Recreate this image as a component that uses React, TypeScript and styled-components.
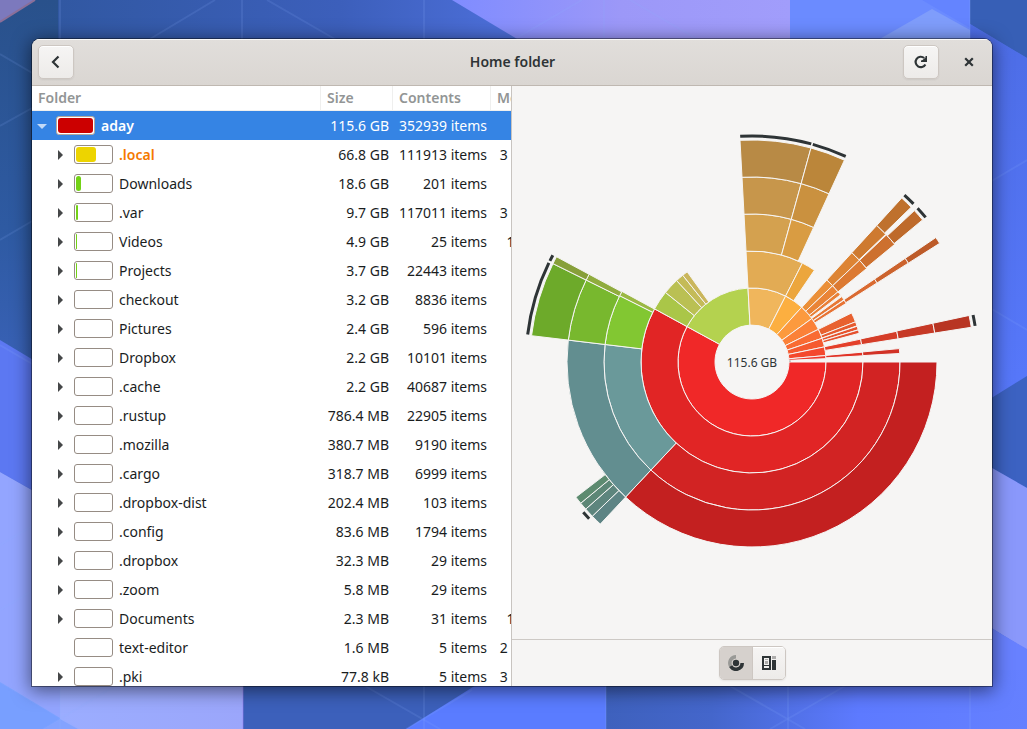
import React from 'react';
import styled, { createGlobalStyle } from 'styled-components';

const Global = createGlobalStyle`
  *, *::before, *::after { box-sizing: border-box; }
  html, body { margin: 0; padding: 0; }
  body {
    background: #4a6ad8;
    font-family: "Noto Sans", "Open Sans", sans-serif;
    font-size: 14px;
    line-height: 20px;
    color: #1a1d1e;
  }
`;

/* ---------- desktop ---------- */

const Desktop = styled.div`
  position: relative;
  display: flex;
  height: 100vh;
  padding: 39px 35px 43px 32px;
  overflow: hidden;
`;

const WallpaperSvg = styled.svg`
  position: absolute;
  inset: 0;
  width: 100%;
  height: 100%;
`;

function Wallpaper() {
  return (
    <WallpaperSvg viewBox="0 0 1027 729" preserveAspectRatio="none" aria-hidden="true">
      <defs>
        <linearGradient id="wTop" x1="0" x2="1" y1="0" y2="0">
          <stop offset="0" stopColor="#3158a2" />
          <stop offset="0.6" stopColor="#3c5fbb" />
          <stop offset="1" stopColor="#4e70dc" />
        </linearGradient>
        <linearGradient id="wLilac" x1="0" x2="1" y1="0" y2="0">
          <stop offset="0" stopColor="#7f8cff" />
          <stop offset="0.5" stopColor="#9c98f8" />
          <stop offset="1" stopColor="#a19dfb" />
        </linearGradient>
        <linearGradient id="wLeft" x1="0" x2="0" y1="0" y2="1">
          <stop offset="0" stopColor="#29518b" />
          <stop offset="0.6" stopColor="#2e5aa2" />
          <stop offset="1" stopColor="#3a62b8" />
        </linearGradient>
        <linearGradient id="wBottomMid" x1="0" x2="1" y1="0" y2="0">
          <stop offset="0" stopColor="#3e61bd" />
          <stop offset="0.25" stopColor="#4466cb" />
          <stop offset="0.6" stopColor="#5d7aff" />
          <stop offset="1" stopColor="#6580ff" />
        </linearGradient>
        <linearGradient id="wBottomLeft" x1="0" x2="1" y1="0" y2="0">
          <stop offset="0" stopColor="#9badff" />
          <stop offset="1" stopColor="#9ba6fb" />
        </linearGradient>
        <linearGradient id="wRight" x1="0" x2="0" y1="0" y2="1">
          <stop offset="0" stopColor="#4d6de6" />
          <stop offset="1" stopColor="#5778fb" />
        </linearGradient>
      </defs>
      <rect width="1027" height="729" fill="#4c6de0" />
      <rect x="58" width="470" height="60" fill="url(#wTop)" />
      <rect width="58" height="380" fill="url(#wLeft)" />
      <path d="M0 0H35L0 22Z" fill="#7c79bd" />
      <path d="M35 0L0 22" stroke="#8b6f98" strokeWidth="2" />
      <path d="M452 0H790V60H552Z" fill="url(#wLilac)" />
      <rect x="790" width="180" height="60" fill="#6b8bff" />
      <path d="M932 9L850 56H970V30Z" fill="#7f9dfb" />
      <path d="M922 0H970V28Z" fill="#6484ff" />
      <path d="M970 0H1027V58L970 24Z" fill="#375fb6" />
      <path d="M970 24L1027 58V380L970 412Z" fill="url(#wRight)" />
      <path d="M1027 376L985 402V464L1027 488Z" fill="#3c62c2" />
      <path d="M985 464L1027 488V650L985 624Z" fill="#8a98fb" />
      <path d="M985 624L1027 650V729H985Z" fill="#6680ff" />
      <path d="M0 340L50 370V500L0 472Z" fill="#5c78f2" />
      <path d="M0 472L60 506V729H0Z" fill="#93a5ff" />
      <path d="M0 682L60 718V729H0Z" fill="#789fff" />
      <rect x="60" y="670" width="183" height="59" fill="url(#wBottomLeft)" />
      <path d="M60 719L78 729H43Z" fill="#84a3ff" />
      <rect x="243" y="670" width="260" height="59" fill="#3c60bb" />
      <path d="M500 670H606V729H406Z" fill="#5a7cff" />
      <rect x="606" y="670" width="421" height="59" fill="url(#wBottomMid)" />
      <path d="M992 629L1027 649V670H992Z" fill="#6881ff" />
      <g stroke="#8fb0ff" strokeOpacity="0.14" strokeWidth="2" fill="none">
        <path d="M60 0V60M242 0V60M424 0V60M604 0V60M970 0V60" />
        <path d="M215 0L150 39M267 0L340 42M582 0L510 42M630 0L702 42" />
        <path d="M0 54L34 74M0 126L34 107M1027 160L990 182M1027 330L990 308" />
        <path d="M60 680V729M424 680V729M606 680V729M788 680V729M970 680V729" />
        <path d="M0 682L78 729M43 729L115 686M365 686L440 729M472 690L406 729M730 686L805 729M845 686L770 729" />
        <path d="M0 545L34 525M0 610L34 590M0 345L34 365M0 240L34 220" />
      </g>
      <path d="M243 680V729" stroke="#9a7ff0" strokeOpacity="0.6" strokeWidth="1" />
    </WallpaperSvg>
  );
}

/* ---------- window ---------- */

const Window = styled.main`
  position: relative;
  flex: 1;
  min-width: 0;
  display: flex;
  flex-direction: column;
  overflow: hidden;
  border-radius: 8px 8px 0 0;
  background: #f6f5f4;
  box-shadow: 0 0 0 1px rgba(0, 0, 0, 0.4), 0 3px 18px 2px rgba(0, 0, 0, 0.5);
`;

const HeaderBar = styled.header`
  flex: none;
  display: grid;
  grid-template-columns: 1fr auto 1fr;
  align-items: center;
  height: 47px;
  padding: 0 5px 0 6px;
  border-bottom: 1px solid #bfb8b1;
  background: linear-gradient(#e1dedb, #dad6d2);
  box-shadow: inset 0 1px #f9f9f8;
`;

const Title = styled.h1`
  margin: 0;
  font-size: 14px;
  line-height: 20px;
  font-weight: 600;
  color: #2e3436;
`;

const HeaderEnd = styled.div`
  display: flex;
  justify-content: flex-end;
  gap: 12px;
`;

const HeaderButton = styled.button<{ $flat?: boolean }>`
  display: flex;
  align-items: center;
  justify-content: center;
  width: 36px;
  height: 34px;
  padding: 0;
  border: 1px solid ${(p) => (p.$flat ? 'transparent' : '#cdc7c2')};
  border-radius: 5px;
  background: ${(p) => (p.$flat ? 'none' : 'linear-gradient(#f6f5f4, #edebe9)')};
  box-shadow: ${(p) => (p.$flat ? 'none' : 'inset 0 1px #fff, 0 1px 2px rgba(0, 0, 0, 0.07)')};
  color: #2e3436;
`;

const Panes = styled.div`
  flex: 1;
  min-height: 0;
  display: flex;
`;

const TreePane = styled.section`
  flex: 0 0 50%;
  min-width: 0;
  overflow: hidden;
  border-right: 1px solid #c8c4c0;
  background: #fff;
`;

const ChartPane = styled.section`
  flex: 1;
  min-width: 0;
  display: flex;
  flex-direction: column;
`;

/* ---------- folder tree ---------- */

const Tree = styled.table`
  width: 100%;
  min-width: 534px;
  table-layout: fixed;
  border-collapse: separate;
  border-spacing: 0;
`;

const Col = styled.col<{ $width?: number }>`
  width: ${(p) => (p.$width ? `${p.$width}px` : 'auto')};
`;

const HeadCell = styled.th`
  height: 25px;
  padding: 0 6px;
  border-right: 1px solid #efefee;
  border-bottom: 1px solid #efefee;
  text-align: left;
  font-weight: 600;
  color: #929595;
`;

const Row = styled.tr<{ $selected?: boolean }>`
  background: ${(p) => (p.$selected ? '#3584e4' : '#fff')};
  color: ${(p) => (p.$selected ? '#fff' : 'inherit')};
`;

const Cell = styled.td`
  height: 29px;
  padding: 0 4px;
  text-align: right;
  white-space: nowrap;
`;

const FolderCell = styled(Cell)`
  padding: 0;
  text-align: left;
`;

const FolderLine = styled.div<{ $depth: number }>`
  display: flex;
  align-items: center;
  gap: 6px;
  padding-left: ${(p) => 2 + p.$depth * 18}px;
`;

const Expander = styled.button`
  display: flex;
  align-items: center;
  justify-content: center;
  width: 16px;
  height: 16px;
  padding: 0;
  border: 0;
  background: none;
  color: inherit;
`;

const ExpanderGap = styled.span`
  width: 16px;
`;

const UsageBar = styled.span<{ $selected?: boolean }>`
  display: flex;
  width: 39px;
  height: 19px;
  padding: 1px;
  border: 1px solid ${(p) => (p.$selected ? '#b3a79c' : '#968c84')};
  border-radius: 3px;
  background: #fff;
`;

const UsageFill = styled.span<{ $color: string; $width: number }>`
  width: ${(p) => p.$width}px;
  border-radius: ${(p) => (p.$width > 4 ? 3 : 1)}px;
  background: ${(p) => p.$color};
`;

const FolderName = styled.span<{ $tone: 'plain' | 'root' | 'accent' }>`
  font-weight: ${(p) => (p.$tone === 'plain' ? 400 : 600)};
  color: ${(p) => (p.$tone === 'accent' ? '#f57900' : 'inherit')};
`;

type Folder = {
  name: string;
  size: string;
  items: string;
  modified?: string;
  fill?: [string, number];
  leaf?: boolean;
  tone?: 'root' | 'accent';
};

const folders: Folder[] = [
  { name: 'aday', size: '115.6 GB', items: '352939 items', fill: ['#cc0000', 35], tone: 'root' },
  { name: '.local', size: '66.8 GB', items: '111913 items', modified: '3 months', fill: ['#edd400', 20], tone: 'accent' },
  { name: 'Downloads', size: '18.6 GB', items: '201 items', fill: ['#73d216', 5] },
  { name: '.var', size: '9.7 GB', items: '117011 items', modified: '3 months', fill: ['#73d216', 2] },
  { name: 'Videos', size: '4.9 GB', items: '25 items', modified: '1 month', fill: ['#73d216', 1] },
  { name: 'Projects', size: '3.7 GB', items: '22443 items', fill: ['#73d216', 1] },
  { name: 'checkout', size: '3.2 GB', items: '8836 items' },
  { name: 'Pictures', size: '2.4 GB', items: '596 items' },
  { name: 'Dropbox', size: '2.2 GB', items: '10101 items' },
  { name: '.cache', size: '2.2 GB', items: '40687 items' },
  { name: '.rustup', size: '786.4 MB', items: '22905 items' },
  { name: '.mozilla', size: '380.7 MB', items: '9190 items' },
  { name: '.cargo', size: '318.7 MB', items: '6999 items' },
  { name: '.dropbox-dist', size: '202.4 MB', items: '103 items' },
  { name: '.config', size: '83.6 MB', items: '1794 items' },
  { name: '.dropbox', size: '32.3 MB', items: '29 items' },
  { name: '.zoom', size: '5.8 MB', items: '29 items' },
  { name: 'Documents', size: '2.3 MB', items: '31 items', modified: '1 month' },
  { name: 'text-editor', size: '1.6 MB', items: '5 items', modified: '2 months', leaf: true },
  { name: '.pki', size: '77.8 kB', items: '5 items', modified: '3 months' },
];

function FolderTree() {
  return (
    <Tree>
      <colgroup>
        <Col $width={289} />
        <Col $width={72} />
        <Col $width={98} />
        <Col />
      </colgroup>
      <thead>
        <tr>
          <HeadCell scope="col">Folder</HeadCell>
          <HeadCell scope="col">Size</HeadCell>
          <HeadCell scope="col">Contents</HeadCell>
          <HeadCell scope="col">Modified</HeadCell>
        </tr>
      </thead>
      <tbody>
        {folders.map((f) => {
          const root = f.tone === 'root';
          return (
            <Row key={f.name} $selected={root} aria-selected={root}>
              <FolderCell>
                <FolderLine $depth={root ? 0 : 1}>
                  {f.leaf ? (
                    <ExpanderGap />
                  ) : (
                    <Expander aria-label={`Toggle ${f.name}`} aria-expanded={root}>
                      <svg width="10" height="10" viewBox="0 0 10 10" aria-hidden="true">
                        {root ? (
                          <path d="M0 3H10L5 8Z" fill="#c3daf7" />
                        ) : (
                          <path d="M3 0V10L8 5Z" fill="#454748" />
                        )}
                      </svg>
                    </Expander>
                  )}
                  <UsageBar $selected={root}>
                    {f.fill && <UsageFill $color={f.fill[0]} $width={f.fill[1]} />}
                  </UsageBar>
                  <FolderName $tone={f.tone ?? 'plain'}>{f.name}</FolderName>
                </FolderLine>
              </FolderCell>
              <Cell>{f.size}</Cell>
              <Cell>{f.items}</Cell>
              <Cell>{f.modified}</Cell>
            </Row>
          );
        })}
      </tbody>
    </Tree>
  );
}

/* ---------- rings chart ---------- */

const ChartArea = styled.div`
  flex: 1;
  min-height: 0;
  display: flex;
  align-items: center;
  justify-content: center;
`;

const ChartLabel = styled.text`
  font-size: 12px;
  fill: #2e3436;
`;

const RING = 37;

function point(radius: number, degrees: number) {
  const a = (degrees * Math.PI) / 180;
  return `${(radius * Math.cos(a)).toFixed(2)} ${(radius * Math.sin(a)).toFixed(2)}`;
}

function sector(level: number, from: number, to: number) {
  const inner = RING * level;
  const outer = inner + RING;
  const large = to - from > 180 ? 1 : 0;
  return (
    `M${point(inner, from)}L${point(outer, from)}` +
    `A${outer} ${outer} 0 ${large} 1 ${point(outer, to)}` +
    `L${point(inner, to)}A${inner} ${inner} 0 ${large} 0 ${point(inner, from)}Z`
  );
}

function arc(radius: number, from: number, to: number) {
  return `M${point(radius, from)}A${radius} ${radius} 0 0 1 ${point(radius, to)}`;
}

/* level, start angle, end angle, colour */
const sectors: [number, number, number, string][] = [
  [1, 0, 208.6, '#f02828'],
  [1, 208.6, 266.9, '#b4d24f'],
  [1, 266.9, 297, '#f0b65c'],
  [1, 297, 312.2, '#fcaf40'],
  [1, 312.2, 324, '#fc9a3e'],
  [1, 324, 333.8, '#fb8138'],
  [1, 333.8, 341.3, '#f96b33'],
  [1, 341.3, 348.2, '#f55a30'],
  [1, 348.2, 355, '#f4482d'],
  [1, 355, 357.4, '#ef382b'],

  [2, 0, 208.6, '#e12525'],
  [2, 208.6, 218.8, '#aac648'],
  [2, 218.8, 227.2, '#bac053'],
  [2, 227.2, 231.4, '#c4bb58'],
  [2, 231.4, 234.3, '#cab65c'],
  [2, 266.9, 297, '#e2ab54'],
  [2, 297, 304.2, '#eca63d'],
  [2, 312.4, 316.6, '#eb8f38'],
  [2, 316.6, 320.8, '#ea8436'],
  [2, 320.8, 322.8, '#e97f36'],
  [2, 323.9, 325.9, '#e87835'],
  [2, 326.1, 328.1, '#e87334'],
  [2, 333.8, 338.8, '#e86130'],
  [2, 338.8, 341, '#e65a2f'],
  [2, 341.2, 343.1, '#e6542e'],
  [2, 343.2, 345, '#e5502d'],
  [2, 348.1, 351, '#e43f2a'],
  [2, 354.9, 356.8, '#e13327'],

  [3, 0, 133.1, '#d22323'],
  [3, 133.1, 186.8, '#6a999a'],
  [3, 186.8, 206.6, '#82c732'],
  [3, 206.6, 208.5, '#9bb844'],
  [3, 266.9, 285.4, '#d4a14f'],
  [3, 285.4, 294.6, '#d99c42'],
  [3, 312.4, 316.6, '#dd8434'],
  [3, 316.6, 320.8, '#dc7a32'],
  [3, 325.9, 327.7, '#da6a31'],
  [3, 348, 351, '#d53d28'],
  [3, 354.8, 356.7, '#d23226'],

  [4, 0, 133.1, '#c32020'],
  [4, 133.1, 186.8, '#628e90'],
  [4, 186.8, 206.3, '#78b82e'],
  [4, 206.3, 208.3, '#90ac3e'],
  [4, 266.9, 285.4, '#c7964b'],
  [4, 285.4, 294.6, '#ca913f'],
  [4, 312.4, 316.3, '#ce7a30'],
  [4, 316.6, 320.5, '#cd702f'],
  [4, 325.9, 327.7, '#cc632d'],
  [4, 347.9, 351, '#c63926'],

  [5, 133.1, 136, '#5d8484'],
  [5, 136, 138.5, '#5d857d'],
  [5, 138.5, 140.5, '#5d8776'],
  [5, 140.5, 142.5, '#5d8b70'],
  [5, 186.8, 206.3, '#6daa2a'],
  [5, 206.3, 208.3, '#879f39'],
  [5, 266.9, 285.4, '#b88a45'],
  [5, 285.4, 294.6, '#bb863a'],
  [5, 312.4, 315.8, '#bf712d'],
  [5, 317, 320.2, '#be6a2b'],
  [5, 325.9, 327.7, '#bd5b29'],
  [5, 347.9, 351, '#b83523'],
];

/* arcs telling that a branch goes deeper than the rings drawn */
const deeper: [number, number][] = [
  [136.1, 138.3],
  [187, 206],
  [206.6, 208.2],
  [267, 285.2],
  [285.6, 294.5],
  [312.4, 315.6],
  [317.1, 320.2],
  [348, 350.8],
];

function RingsChart() {
  return (
    <svg width="460" height="461" viewBox="-230 -230 460 461" role="img" aria-label="Rings chart of folder sizes">
      <g stroke="#f6f5f4" strokeWidth="1">
        {sectors.map(([level, from, to, color]) => (
          <path key={`${level}-${from}`} d={sector(level, from, to)} fill={color} />
        ))}
      </g>
      <path d={arc(38, 357.6, 359.6)} stroke="#a9a6a2" strokeWidth="1.5" fill="none" />
      <g stroke="#2e3436" strokeWidth="3" fill="none">
        {deeper.map(([from, to]) => (
          <path key={from} d={arc(226, from, to)} />
        ))}
      </g>
      <ChartLabel x="0" y="5" textAnchor="middle">
        115.6 GB
      </ChartLabel>
    </svg>
  );
}

/* ---------- chart switcher ---------- */

const Switcher = styled.div`
  flex: none;
  display: flex;
  justify-content: center;
  align-items: center;
  height: 47px;
  border-top: 1px solid #cdc9c5;
`;

const SwitchGroup = styled.div`
  display: flex;
  height: 34px;
  border: 1px solid #cdc7c2;
  border-radius: 5px;
  overflow: hidden;
  box-shadow: 0 1px 2px rgba(0, 0, 0, 0.07);
`;

const SwitchButton = styled.button<{ $active?: boolean }>`
  display: flex;
  align-items: center;
  justify-content: center;
  width: ${(p) => (p.$active ? 33 : 32)}px;
  padding: 0;
  border: 0;
  border-right: ${(p) => (p.$active ? '1px solid #cdc7c2' : '0')};
  background: ${(p) => (p.$active ? '#d6d1cd' : 'linear-gradient(#f6f5f4, #edebe9)')};
  box-shadow: ${(p) => (p.$active ? 'none' : 'inset 0 1px #fff')};
`;

export default function App() {
  return (
    <>
      <Global />
      <Desktop>
        <Wallpaper />
        <Window>
          <HeaderBar>
            <HeaderButton aria-label="Back">
              <svg width="16" height="16" viewBox="0 0 16 16" fill="none" stroke="currentColor" strokeWidth="2.2" aria-hidden="true">
                <path d="M10.5 2.5L5 8L10.5 13.5" />
              </svg>
            </HeaderButton>
            <Title>Home folder</Title>
            <HeaderEnd>
              <HeaderButton aria-label="Reload">
                <svg width="16" height="16" viewBox="0 0 16 16" aria-hidden="true">
                  <path d="M12.4 10.4A5.2 5.2 0 1 1 11.2 4" fill="none" stroke="currentColor" strokeWidth="2.2" />
                  <path d="M14 2V8H8V6.5L9.5 6L12.5 3.5V2Z" fill="currentColor" />
                </svg>
              </HeaderButton>
              <HeaderButton $flat aria-label="Close">
                <svg width="16" height="16" viewBox="0 0 16 16" fill="none" stroke="currentColor" strokeWidth="2.2" aria-hidden="true">
                  <path d="M4.2 4.2L11.8 11.8M11.8 4.2L4.2 11.8" />
                </svg>
              </HeaderButton>
            </HeaderEnd>
          </HeaderBar>
          <Panes>
            <TreePane>
              <FolderTree />
            </TreePane>
            <ChartPane>
              <ChartArea>
                <RingsChart />
              </ChartArea>
              <Switcher>
                <SwitchGroup role="group" aria-label="Chart type">
                  <SwitchButton $active aria-pressed="true" aria-label="Rings chart">
                    <svg width="16" height="16" viewBox="0 0 16 16" aria-hidden="true">
                      <path d="M8 0A8 8 0 0 0 1.1 12L4.2 10.2A4.4 4.4 0 0 1 8 3.6Z" fill="#999996" />
                      <path d="M16 8A8 8 0 0 1 1.1 12L4.2 10.2A4.4 4.4 0 0 0 12.4 8Z" fill="#2e3436" />
                      <circle cx="8" cy="8" r="3.2" fill="#2e3436" />
                    </svg>
                  </SwitchButton>
                  <SwitchButton aria-pressed="false" aria-label="Treemap chart">
                    <svg width="16" height="16" viewBox="0 0 16 16" aria-hidden="true">
                      <path d="M1 1H10V15H1ZM3 3V10H8V3ZM3 11V13H8V11Z" fill="#2e3436" fillRule="evenodd" />
                      <path d="M4 4H7V5H4ZM4 6H7V9H4ZM11 1H15V4H11Z" fill="#adacab" />
                      <path d="M11 5H15V15H11Z" fill="#2e3436" />
                    </svg>
                  </SwitchButton>
                </SwitchGroup>
              </Switcher>
            </ChartPane>
          </Panes>
        </Window>
      </Desktop>
    </>
  );
}
